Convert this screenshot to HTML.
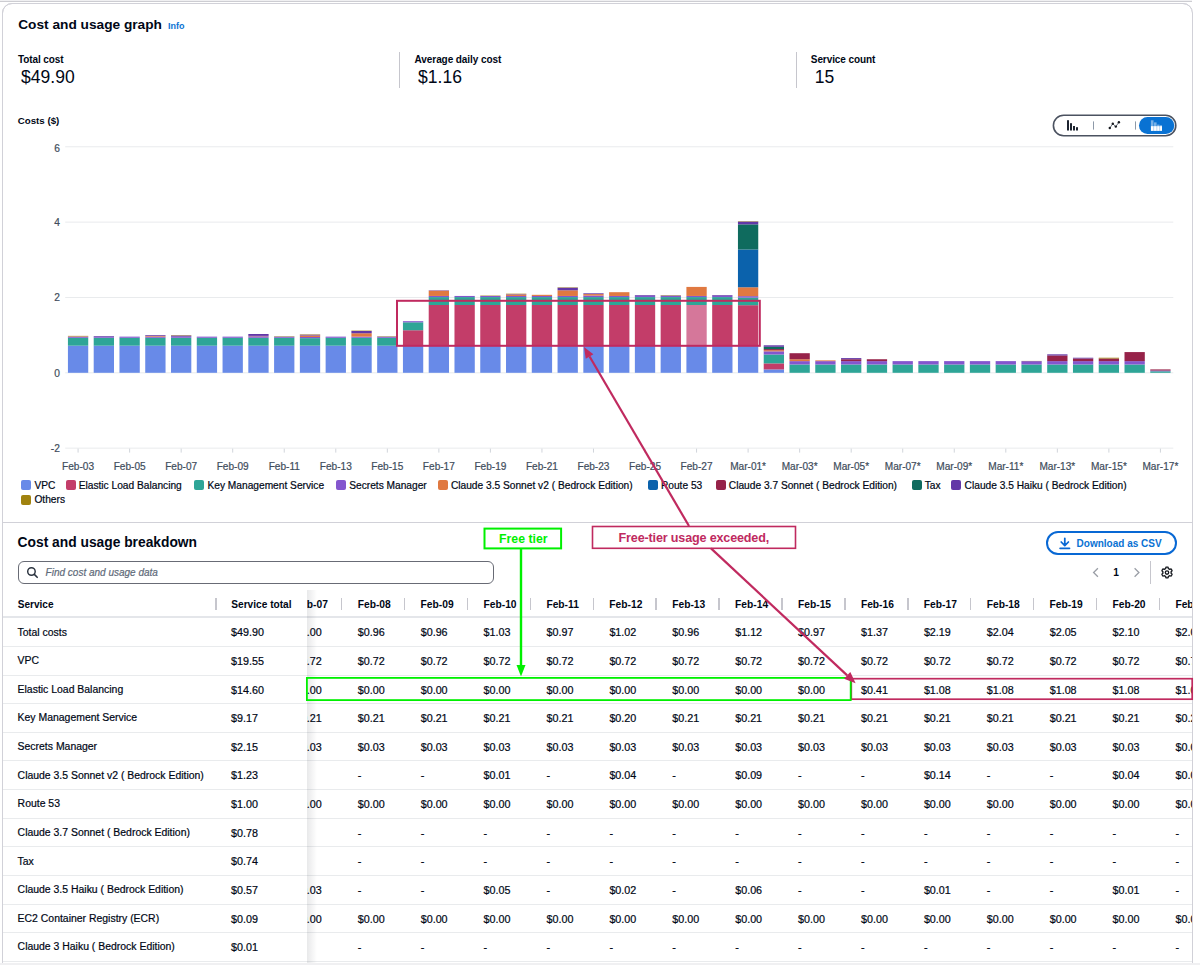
<!DOCTYPE html>
<html><head><meta charset="utf-8"><style>
html,body{margin:0;padding:0;}
body{width:1200px;height:965px;overflow:hidden;position:relative;background:#fff;font-family:"Liberation Sans", sans-serif;}
.t{position:absolute;white-space:nowrap;line-height:1;}
svg{position:absolute;left:0;top:0;}
</style></head><body>
<div style="position:absolute;left:0.00px;top:0.00px;width:1200.00px;height:1.00px;background:#f0f0f2;"></div>
<div style="position:absolute;left:0.00px;top:1.00px;width:1200.00px;height:1.00px;background:#cdcdd2;"></div>
<div style="position:absolute;left:2px;top:3px;width:1189px;height:1100px;border:1px solid #d1d1d8;border-radius:10px;background:#fff"></div>
<div class="t" style="left:18.20px;top:17.70px;font-size:13.7px;font-weight:bold;font-style:normal;color:#000716;">Cost and usage graph</div>
<div class="t" style="left:168.00px;top:21.68px;font-size:9.0px;font-weight:bold;font-style:normal;color:#0972d3;">Info</div>
<div class="t" style="left:17.90px;top:54.73px;font-size:10.0px;font-weight:bold;font-style:normal;color:#000716;letter-spacing:-0.08px;">Total cost</div>
<div class="t" style="left:21.00px;top:69.29px;font-size:17.5px;font-weight:normal;font-style:normal;color:#000716;letter-spacing:0.05px;">$49.90</div>
<div style="position:absolute;left:399.00px;top:51.50px;width:1.00px;height:36.50px;background:#c6c6cd;"></div>
<div class="t" style="left:414.60px;top:54.73px;font-size:10.0px;font-weight:bold;font-style:normal;color:#000716;letter-spacing:-0.08px;">Average daily cost</div>
<div class="t" style="left:418.00px;top:69.19px;font-size:17.5px;font-weight:normal;font-style:normal;color:#000716;letter-spacing:0.05px;">$1.16</div>
<div style="position:absolute;left:796.00px;top:51.50px;width:1.00px;height:36.50px;background:#c6c6cd;"></div>
<div class="t" style="left:810.80px;top:54.73px;font-size:10.0px;font-weight:bold;font-style:normal;color:#000716;letter-spacing:-0.08px;">Service count</div>
<div class="t" style="left:814.80px;top:69.19px;font-size:17.5px;font-weight:normal;font-style:normal;color:#000716;letter-spacing:0.05px;">15</div>
<div class="t" style="left:17.80px;top:116.39px;font-size:9.7px;font-weight:bold;font-style:normal;color:#000716;">Costs ($)</div>
<div class="t" style="left:-540.20px;width:600px;text-align:right;top:144.15px;font-size:10.2px;font-weight:normal;font-style:normal;color:#414d5c;-webkit-text-stroke:0.2px currentColor;">6</div>
<div class="t" style="left:-540.20px;width:600px;text-align:right;top:217.89px;font-size:10.2px;font-weight:normal;font-style:normal;color:#414d5c;-webkit-text-stroke:0.2px currentColor;">4</div>
<div class="t" style="left:-540.20px;width:600px;text-align:right;top:293.23px;font-size:10.2px;font-weight:normal;font-style:normal;color:#414d5c;-webkit-text-stroke:0.2px currentColor;">2</div>
<div class="t" style="left:-540.20px;width:600px;text-align:right;top:368.57px;font-size:10.2px;font-weight:normal;font-style:normal;color:#414d5c;-webkit-text-stroke:0.2px currentColor;">0</div>
<div class="t" style="left:-540.20px;width:600px;text-align:right;top:443.91px;font-size:10.2px;font-weight:normal;font-style:normal;color:#414d5c;-webkit-text-stroke:0.2px currentColor;">-2</div>
<div class="t" style="left:-221.92px;width:600px;text-align:center;top:461.55px;font-size:10.1px;font-weight:normal;font-style:normal;color:#414d5c;-webkit-text-stroke:0.2px currentColor;">Feb-03</div>
<div class="t" style="left:-170.38px;width:600px;text-align:center;top:461.55px;font-size:10.1px;font-weight:normal;font-style:normal;color:#414d5c;-webkit-text-stroke:0.2px currentColor;">Feb-05</div>
<div class="t" style="left:-118.84px;width:600px;text-align:center;top:461.55px;font-size:10.1px;font-weight:normal;font-style:normal;color:#414d5c;-webkit-text-stroke:0.2px currentColor;">Feb-07</div>
<div class="t" style="left:-67.30px;width:600px;text-align:center;top:461.55px;font-size:10.1px;font-weight:normal;font-style:normal;color:#414d5c;-webkit-text-stroke:0.2px currentColor;">Feb-09</div>
<div class="t" style="left:-15.76px;width:600px;text-align:center;top:461.55px;font-size:10.1px;font-weight:normal;font-style:normal;color:#414d5c;-webkit-text-stroke:0.2px currentColor;">Feb-11</div>
<div class="t" style="left:35.78px;width:600px;text-align:center;top:461.55px;font-size:10.1px;font-weight:normal;font-style:normal;color:#414d5c;-webkit-text-stroke:0.2px currentColor;">Feb-13</div>
<div class="t" style="left:87.32px;width:600px;text-align:center;top:461.55px;font-size:10.1px;font-weight:normal;font-style:normal;color:#414d5c;-webkit-text-stroke:0.2px currentColor;">Feb-15</div>
<div class="t" style="left:138.86px;width:600px;text-align:center;top:461.55px;font-size:10.1px;font-weight:normal;font-style:normal;color:#414d5c;-webkit-text-stroke:0.2px currentColor;">Feb-17</div>
<div class="t" style="left:190.40px;width:600px;text-align:center;top:461.55px;font-size:10.1px;font-weight:normal;font-style:normal;color:#414d5c;-webkit-text-stroke:0.2px currentColor;">Feb-19</div>
<div class="t" style="left:241.94px;width:600px;text-align:center;top:461.55px;font-size:10.1px;font-weight:normal;font-style:normal;color:#414d5c;-webkit-text-stroke:0.2px currentColor;">Feb-21</div>
<div class="t" style="left:293.48px;width:600px;text-align:center;top:461.55px;font-size:10.1px;font-weight:normal;font-style:normal;color:#414d5c;-webkit-text-stroke:0.2px currentColor;">Feb-23</div>
<div class="t" style="left:345.02px;width:600px;text-align:center;top:461.55px;font-size:10.1px;font-weight:normal;font-style:normal;color:#414d5c;-webkit-text-stroke:0.2px currentColor;">Feb-25</div>
<div class="t" style="left:396.56px;width:600px;text-align:center;top:461.55px;font-size:10.1px;font-weight:normal;font-style:normal;color:#414d5c;-webkit-text-stroke:0.2px currentColor;">Feb-27</div>
<div class="t" style="left:448.10px;width:600px;text-align:center;top:461.55px;font-size:10.1px;font-weight:normal;font-style:normal;color:#414d5c;-webkit-text-stroke:0.2px currentColor;">Mar-01*</div>
<div class="t" style="left:499.64px;width:600px;text-align:center;top:461.55px;font-size:10.1px;font-weight:normal;font-style:normal;color:#414d5c;-webkit-text-stroke:0.2px currentColor;">Mar-03*</div>
<div class="t" style="left:551.18px;width:600px;text-align:center;top:461.55px;font-size:10.1px;font-weight:normal;font-style:normal;color:#414d5c;-webkit-text-stroke:0.2px currentColor;">Mar-05*</div>
<div class="t" style="left:602.72px;width:600px;text-align:center;top:461.55px;font-size:10.1px;font-weight:normal;font-style:normal;color:#414d5c;-webkit-text-stroke:0.2px currentColor;">Mar-07*</div>
<div class="t" style="left:654.26px;width:600px;text-align:center;top:461.55px;font-size:10.1px;font-weight:normal;font-style:normal;color:#414d5c;-webkit-text-stroke:0.2px currentColor;">Mar-09*</div>
<div class="t" style="left:705.80px;width:600px;text-align:center;top:461.55px;font-size:10.1px;font-weight:normal;font-style:normal;color:#414d5c;-webkit-text-stroke:0.2px currentColor;">Mar-11*</div>
<div class="t" style="left:757.34px;width:600px;text-align:center;top:461.55px;font-size:10.1px;font-weight:normal;font-style:normal;color:#414d5c;-webkit-text-stroke:0.2px currentColor;">Mar-13*</div>
<div class="t" style="left:808.88px;width:600px;text-align:center;top:461.55px;font-size:10.1px;font-weight:normal;font-style:normal;color:#414d5c;-webkit-text-stroke:0.2px currentColor;">Mar-15*</div>
<div class="t" style="left:860.42px;width:600px;text-align:center;top:461.55px;font-size:10.1px;font-weight:normal;font-style:normal;color:#414d5c;-webkit-text-stroke:0.2px currentColor;">Mar-17*</div>
<div style="position:absolute;left:21.25px;top:480.00px;width:10.00px;height:10.00px;background:#688ae8;border-radius:2px;"></div>
<div class="t" style="left:34.45px;top:480.67px;font-size:10.2px;font-weight:normal;font-style:normal;color:#000716;-webkit-text-stroke:0.2px currentColor;">VPC</div>
<div style="position:absolute;left:65.50px;top:480.00px;width:10.00px;height:10.00px;background:#c33d69;border-radius:2px;"></div>
<div class="t" style="left:78.70px;top:480.67px;font-size:10.2px;font-weight:normal;font-style:normal;color:#000716;-webkit-text-stroke:0.2px currentColor;">Elastic Load Balancing</div>
<div style="position:absolute;left:194.25px;top:480.00px;width:10.00px;height:10.00px;background:#2ea597;border-radius:2px;"></div>
<div class="t" style="left:207.45px;top:480.67px;font-size:10.2px;font-weight:normal;font-style:normal;color:#000716;-webkit-text-stroke:0.2px currentColor;">Key Management Service</div>
<div style="position:absolute;left:336.00px;top:480.00px;width:10.00px;height:10.00px;background:#8456ce;border-radius:2px;"></div>
<div class="t" style="left:349.20px;top:480.67px;font-size:10.2px;font-weight:normal;font-style:normal;color:#000716;-webkit-text-stroke:0.2px currentColor;">Secrets Manager</div>
<div style="position:absolute;left:437.70px;top:480.00px;width:10.00px;height:10.00px;background:#e07941;border-radius:2px;"></div>
<div class="t" style="left:450.90px;top:480.67px;font-size:10.2px;font-weight:normal;font-style:normal;color:#000716;-webkit-text-stroke:0.2px currentColor;">Claude 3.5 Sonnet v2 ( Bedrock Edition)</div>
<div style="position:absolute;left:647.70px;top:480.00px;width:10.00px;height:10.00px;background:#0b62ac;border-radius:2px;"></div>
<div class="t" style="left:660.90px;top:480.67px;font-size:10.2px;font-weight:normal;font-style:normal;color:#000716;-webkit-text-stroke:0.2px currentColor;">Route 53</div>
<div style="position:absolute;left:715.60px;top:480.00px;width:10.00px;height:10.00px;background:#962249;border-radius:2px;"></div>
<div class="t" style="left:728.80px;top:480.67px;font-size:10.2px;font-weight:normal;font-style:normal;color:#000716;-webkit-text-stroke:0.2px currentColor;">Claude 3.7 Sonnet ( Bedrock Edition)</div>
<div style="position:absolute;left:911.50px;top:480.00px;width:10.00px;height:10.00px;background:#0f6b5e;border-radius:2px;"></div>
<div class="t" style="left:924.70px;top:480.67px;font-size:10.2px;font-weight:normal;font-style:normal;color:#000716;-webkit-text-stroke:0.2px currentColor;">Tax</div>
<div style="position:absolute;left:951.40px;top:480.00px;width:10.00px;height:10.00px;background:#6237a7;border-radius:2px;"></div>
<div class="t" style="left:964.60px;top:480.67px;font-size:10.2px;font-weight:normal;font-style:normal;color:#000716;-webkit-text-stroke:0.2px currentColor;">Claude 3.5 Haiku ( Bedrock Edition)</div>
<div style="position:absolute;left:21.25px;top:495.00px;width:10.00px;height:10.00px;background:#a0820f;border-radius:2px;"></div>
<div class="t" style="left:34.45px;top:495.17px;font-size:10.2px;font-weight:normal;font-style:normal;color:#000716;-webkit-text-stroke:0.2px currentColor;">Others</div>
<div style="position:absolute;left:3.00px;top:522.00px;width:1189.00px;height:1.00px;background:#d1d1d8;"></div>
<div class="t" style="left:17.60px;top:535.82px;font-size:13.8px;font-weight:bold;font-style:normal;color:#000716;">Cost and usage breakdown</div>
<div style="position:absolute;left:1045.8px;top:531.0px;width:127.2px;height:19.8px;border:2px solid #0868d4;border-radius:12px;"></div>
<div class="t" style="left:1076.60px;top:538.93px;font-size:10.0px;font-weight:bold;font-style:normal;color:#0972d3;">Download as CSV</div>
<div class="t" style="left:816.20px;width:600px;text-align:center;top:567.67px;font-size:10.2px;font-weight:bold;font-style:normal;color:#000716;">1</div>
<div style="position:absolute;left:1150.00px;top:560.80px;width:1.00px;height:23.00px;background:#c6c6cd;"></div>
<div style="position:absolute;left:18.3px;top:561px;width:473.4px;height:20.7px;border:1px solid #686b75;border-radius:6px;"></div>
<div class="t" style="left:45.60px;top:567.53px;font-size:10.0px;font-weight:normal;font-style:italic;color:#5f6b7a;-webkit-text-stroke:0.2px currentColor;">Find cost and usage data</div>
<div style="position:absolute;left:3.00px;top:616.00px;width:1189.00px;height:2.00px;background:#e4e6ea;"></div>
<div style="position:absolute;left:3.00px;top:646.00px;width:1189.00px;height:1.00px;background:#e9ebed;"></div>
<div style="position:absolute;left:3.00px;top:675.00px;width:1189.00px;height:1.00px;background:#e9ebed;"></div>
<div style="position:absolute;left:3.00px;top:703.00px;width:1189.00px;height:1.00px;background:#e9ebed;"></div>
<div style="position:absolute;left:3.00px;top:732.00px;width:1189.00px;height:1.00px;background:#e9ebed;"></div>
<div style="position:absolute;left:3.00px;top:760.00px;width:1189.00px;height:1.00px;background:#e9ebed;"></div>
<div style="position:absolute;left:3.00px;top:789.00px;width:1189.00px;height:1.00px;background:#e9ebed;"></div>
<div style="position:absolute;left:3.00px;top:818.00px;width:1189.00px;height:1.00px;background:#e9ebed;"></div>
<div style="position:absolute;left:3.00px;top:846.00px;width:1189.00px;height:1.00px;background:#e9ebed;"></div>
<div style="position:absolute;left:3.00px;top:875.00px;width:1189.00px;height:1.00px;background:#e9ebed;"></div>
<div style="position:absolute;left:3.00px;top:904.00px;width:1189.00px;height:1.00px;background:#e9ebed;"></div>
<div style="position:absolute;left:3.00px;top:932.00px;width:1189.00px;height:1.00px;background:#e9ebed;"></div>
<div style="position:absolute;left:3.00px;top:961.00px;width:1189.00px;height:1.00px;background:#e9ebed;"></div>
<div class="t" style="left:17.60px;top:627.66px;font-size:10.45px;font-weight:normal;font-style:normal;color:#000716;-webkit-text-stroke:0.2px currentColor;">Total costs</div>
<div class="t" style="left:231.00px;top:627.41px;font-size:10.75px;font-weight:normal;font-style:normal;color:#000716;-webkit-text-stroke:0.2px currentColor;">$49.90</div>
<div class="t" style="left:17.60px;top:656.27px;font-size:10.45px;font-weight:normal;font-style:normal;color:#000716;-webkit-text-stroke:0.2px currentColor;">VPC</div>
<div class="t" style="left:231.00px;top:656.02px;font-size:10.75px;font-weight:normal;font-style:normal;color:#000716;-webkit-text-stroke:0.2px currentColor;">$19.55</div>
<div class="t" style="left:17.60px;top:684.88px;font-size:10.45px;font-weight:normal;font-style:normal;color:#000716;-webkit-text-stroke:0.2px currentColor;">Elastic Load Balancing</div>
<div class="t" style="left:231.00px;top:684.63px;font-size:10.75px;font-weight:normal;font-style:normal;color:#000716;-webkit-text-stroke:0.2px currentColor;">$14.60</div>
<div class="t" style="left:17.60px;top:713.49px;font-size:10.45px;font-weight:normal;font-style:normal;color:#000716;-webkit-text-stroke:0.2px currentColor;">Key Management Service</div>
<div class="t" style="left:231.00px;top:713.24px;font-size:10.75px;font-weight:normal;font-style:normal;color:#000716;-webkit-text-stroke:0.2px currentColor;">$9.17</div>
<div class="t" style="left:17.60px;top:742.10px;font-size:10.45px;font-weight:normal;font-style:normal;color:#000716;-webkit-text-stroke:0.2px currentColor;">Secrets Manager</div>
<div class="t" style="left:231.00px;top:741.85px;font-size:10.75px;font-weight:normal;font-style:normal;color:#000716;-webkit-text-stroke:0.2px currentColor;">$2.15</div>
<div class="t" style="left:17.60px;top:770.71px;font-size:10.45px;font-weight:normal;font-style:normal;color:#000716;-webkit-text-stroke:0.2px currentColor;">Claude 3.5 Sonnet v2 ( Bedrock Edition)</div>
<div class="t" style="left:231.00px;top:770.46px;font-size:10.75px;font-weight:normal;font-style:normal;color:#000716;-webkit-text-stroke:0.2px currentColor;">$1.23</div>
<div class="t" style="left:17.60px;top:799.32px;font-size:10.45px;font-weight:normal;font-style:normal;color:#000716;-webkit-text-stroke:0.2px currentColor;">Route 53</div>
<div class="t" style="left:231.00px;top:799.07px;font-size:10.75px;font-weight:normal;font-style:normal;color:#000716;-webkit-text-stroke:0.2px currentColor;">$1.00</div>
<div class="t" style="left:17.60px;top:827.93px;font-size:10.45px;font-weight:normal;font-style:normal;color:#000716;-webkit-text-stroke:0.2px currentColor;">Claude 3.7 Sonnet ( Bedrock Edition)</div>
<div class="t" style="left:231.00px;top:827.68px;font-size:10.75px;font-weight:normal;font-style:normal;color:#000716;-webkit-text-stroke:0.2px currentColor;">$0.78</div>
<div class="t" style="left:17.60px;top:856.54px;font-size:10.45px;font-weight:normal;font-style:normal;color:#000716;-webkit-text-stroke:0.2px currentColor;">Tax</div>
<div class="t" style="left:231.00px;top:856.29px;font-size:10.75px;font-weight:normal;font-style:normal;color:#000716;-webkit-text-stroke:0.2px currentColor;">$0.74</div>
<div class="t" style="left:17.60px;top:885.15px;font-size:10.45px;font-weight:normal;font-style:normal;color:#000716;-webkit-text-stroke:0.2px currentColor;">Claude 3.5 Haiku ( Bedrock Edition)</div>
<div class="t" style="left:231.00px;top:884.90px;font-size:10.75px;font-weight:normal;font-style:normal;color:#000716;-webkit-text-stroke:0.2px currentColor;">$0.57</div>
<div class="t" style="left:17.60px;top:913.76px;font-size:10.45px;font-weight:normal;font-style:normal;color:#000716;-webkit-text-stroke:0.2px currentColor;">EC2 Container Registry (ECR)</div>
<div class="t" style="left:231.00px;top:913.51px;font-size:10.75px;font-weight:normal;font-style:normal;color:#000716;-webkit-text-stroke:0.2px currentColor;">$0.09</div>
<div class="t" style="left:17.60px;top:942.37px;font-size:10.45px;font-weight:normal;font-style:normal;color:#000716;-webkit-text-stroke:0.2px currentColor;">Claude 3 Haiku ( Bedrock Edition)</div>
<div class="t" style="left:231.00px;top:942.12px;font-size:10.75px;font-weight:normal;font-style:normal;color:#000716;-webkit-text-stroke:0.2px currentColor;">$0.01</div>
<div style="position:absolute;left:307px;top:585px;width:885px;height:380px;overflow:hidden"><div class="t" style="left:-12.20px;top:14.82px;font-size:10.25px;font-weight:bold;font-style:normal;color:#000716;">Feb-07</div>
<div style="position:absolute;left:33.95px;top:12.50px;width:1.50px;height:12.20px;background:#c6c6cd;"></div>
<div class="t" style="left:50.70px;top:14.82px;font-size:10.25px;font-weight:bold;font-style:normal;color:#000716;">Feb-08</div>
<div style="position:absolute;left:96.85px;top:12.50px;width:1.50px;height:12.20px;background:#c6c6cd;"></div>
<div class="t" style="left:113.60px;top:14.82px;font-size:10.25px;font-weight:bold;font-style:normal;color:#000716;">Feb-09</div>
<div style="position:absolute;left:159.75px;top:12.50px;width:1.50px;height:12.20px;background:#c6c6cd;"></div>
<div class="t" style="left:176.50px;top:14.82px;font-size:10.25px;font-weight:bold;font-style:normal;color:#000716;">Feb-10</div>
<div style="position:absolute;left:222.65px;top:12.50px;width:1.50px;height:12.20px;background:#c6c6cd;"></div>
<div class="t" style="left:239.40px;top:14.82px;font-size:10.25px;font-weight:bold;font-style:normal;color:#000716;">Feb-11</div>
<div style="position:absolute;left:285.55px;top:12.50px;width:1.50px;height:12.20px;background:#c6c6cd;"></div>
<div class="t" style="left:302.30px;top:14.82px;font-size:10.25px;font-weight:bold;font-style:normal;color:#000716;">Feb-12</div>
<div style="position:absolute;left:348.45px;top:12.50px;width:1.50px;height:12.20px;background:#c6c6cd;"></div>
<div class="t" style="left:365.20px;top:14.82px;font-size:10.25px;font-weight:bold;font-style:normal;color:#000716;">Feb-13</div>
<div style="position:absolute;left:411.35px;top:12.50px;width:1.50px;height:12.20px;background:#c6c6cd;"></div>
<div class="t" style="left:428.10px;top:14.82px;font-size:10.25px;font-weight:bold;font-style:normal;color:#000716;">Feb-14</div>
<div style="position:absolute;left:474.25px;top:12.50px;width:1.50px;height:12.20px;background:#c6c6cd;"></div>
<div class="t" style="left:491.00px;top:14.82px;font-size:10.25px;font-weight:bold;font-style:normal;color:#000716;">Feb-15</div>
<div style="position:absolute;left:537.15px;top:12.50px;width:1.50px;height:12.20px;background:#c6c6cd;"></div>
<div class="t" style="left:553.90px;top:14.82px;font-size:10.25px;font-weight:bold;font-style:normal;color:#000716;">Feb-16</div>
<div style="position:absolute;left:600.05px;top:12.50px;width:1.50px;height:12.20px;background:#c6c6cd;"></div>
<div class="t" style="left:616.80px;top:14.82px;font-size:10.25px;font-weight:bold;font-style:normal;color:#000716;">Feb-17</div>
<div style="position:absolute;left:662.95px;top:12.50px;width:1.50px;height:12.20px;background:#c6c6cd;"></div>
<div class="t" style="left:679.70px;top:14.82px;font-size:10.25px;font-weight:bold;font-style:normal;color:#000716;">Feb-18</div>
<div style="position:absolute;left:725.85px;top:12.50px;width:1.50px;height:12.20px;background:#c6c6cd;"></div>
<div class="t" style="left:742.60px;top:14.82px;font-size:10.25px;font-weight:bold;font-style:normal;color:#000716;">Feb-19</div>
<div style="position:absolute;left:788.75px;top:12.50px;width:1.50px;height:12.20px;background:#c6c6cd;"></div>
<div class="t" style="left:805.50px;top:14.82px;font-size:10.25px;font-weight:bold;font-style:normal;color:#000716;">Feb-20</div>
<div style="position:absolute;left:851.65px;top:12.50px;width:1.50px;height:12.20px;background:#c6c6cd;"></div>
<div class="t" style="left:868.40px;top:14.82px;font-size:10.25px;font-weight:bold;font-style:normal;color:#000716;">Feb-21</div>
<div style="position:absolute;left:914.55px;top:12.50px;width:1.50px;height:12.20px;background:#c6c6cd;"></div>
<div class="t" style="left:-12.10px;top:42.41px;font-size:10.75px;font-weight:normal;font-style:normal;color:#000716;-webkit-text-stroke:0.2px currentColor;">$1.00</div>
<div class="t" style="left:50.80px;top:42.41px;font-size:10.75px;font-weight:normal;font-style:normal;color:#000716;-webkit-text-stroke:0.2px currentColor;">$0.96</div>
<div class="t" style="left:113.70px;top:42.41px;font-size:10.75px;font-weight:normal;font-style:normal;color:#000716;-webkit-text-stroke:0.2px currentColor;">$0.96</div>
<div class="t" style="left:176.60px;top:42.41px;font-size:10.75px;font-weight:normal;font-style:normal;color:#000716;-webkit-text-stroke:0.2px currentColor;">$1.03</div>
<div class="t" style="left:239.50px;top:42.41px;font-size:10.75px;font-weight:normal;font-style:normal;color:#000716;-webkit-text-stroke:0.2px currentColor;">$0.97</div>
<div class="t" style="left:302.40px;top:42.41px;font-size:10.75px;font-weight:normal;font-style:normal;color:#000716;-webkit-text-stroke:0.2px currentColor;">$1.02</div>
<div class="t" style="left:365.30px;top:42.41px;font-size:10.75px;font-weight:normal;font-style:normal;color:#000716;-webkit-text-stroke:0.2px currentColor;">$0.96</div>
<div class="t" style="left:428.20px;top:42.41px;font-size:10.75px;font-weight:normal;font-style:normal;color:#000716;-webkit-text-stroke:0.2px currentColor;">$1.12</div>
<div class="t" style="left:491.10px;top:42.41px;font-size:10.75px;font-weight:normal;font-style:normal;color:#000716;-webkit-text-stroke:0.2px currentColor;">$0.97</div>
<div class="t" style="left:554.00px;top:42.41px;font-size:10.75px;font-weight:normal;font-style:normal;color:#000716;-webkit-text-stroke:0.2px currentColor;">$1.37</div>
<div class="t" style="left:616.90px;top:42.41px;font-size:10.75px;font-weight:normal;font-style:normal;color:#000716;-webkit-text-stroke:0.2px currentColor;">$2.19</div>
<div class="t" style="left:679.80px;top:42.41px;font-size:10.75px;font-weight:normal;font-style:normal;color:#000716;-webkit-text-stroke:0.2px currentColor;">$2.04</div>
<div class="t" style="left:742.70px;top:42.41px;font-size:10.75px;font-weight:normal;font-style:normal;color:#000716;-webkit-text-stroke:0.2px currentColor;">$2.05</div>
<div class="t" style="left:805.60px;top:42.41px;font-size:10.75px;font-weight:normal;font-style:normal;color:#000716;-webkit-text-stroke:0.2px currentColor;">$2.10</div>
<div class="t" style="left:868.50px;top:42.41px;font-size:10.75px;font-weight:normal;font-style:normal;color:#000716;-webkit-text-stroke:0.2px currentColor;">$2.07</div>
<div class="t" style="left:-12.10px;top:71.02px;font-size:10.75px;font-weight:normal;font-style:normal;color:#000716;-webkit-text-stroke:0.2px currentColor;">$0.72</div>
<div class="t" style="left:50.80px;top:71.02px;font-size:10.75px;font-weight:normal;font-style:normal;color:#000716;-webkit-text-stroke:0.2px currentColor;">$0.72</div>
<div class="t" style="left:113.70px;top:71.02px;font-size:10.75px;font-weight:normal;font-style:normal;color:#000716;-webkit-text-stroke:0.2px currentColor;">$0.72</div>
<div class="t" style="left:176.60px;top:71.02px;font-size:10.75px;font-weight:normal;font-style:normal;color:#000716;-webkit-text-stroke:0.2px currentColor;">$0.72</div>
<div class="t" style="left:239.50px;top:71.02px;font-size:10.75px;font-weight:normal;font-style:normal;color:#000716;-webkit-text-stroke:0.2px currentColor;">$0.72</div>
<div class="t" style="left:302.40px;top:71.02px;font-size:10.75px;font-weight:normal;font-style:normal;color:#000716;-webkit-text-stroke:0.2px currentColor;">$0.72</div>
<div class="t" style="left:365.30px;top:71.02px;font-size:10.75px;font-weight:normal;font-style:normal;color:#000716;-webkit-text-stroke:0.2px currentColor;">$0.72</div>
<div class="t" style="left:428.20px;top:71.02px;font-size:10.75px;font-weight:normal;font-style:normal;color:#000716;-webkit-text-stroke:0.2px currentColor;">$0.72</div>
<div class="t" style="left:491.10px;top:71.02px;font-size:10.75px;font-weight:normal;font-style:normal;color:#000716;-webkit-text-stroke:0.2px currentColor;">$0.72</div>
<div class="t" style="left:554.00px;top:71.02px;font-size:10.75px;font-weight:normal;font-style:normal;color:#000716;-webkit-text-stroke:0.2px currentColor;">$0.72</div>
<div class="t" style="left:616.90px;top:71.02px;font-size:10.75px;font-weight:normal;font-style:normal;color:#000716;-webkit-text-stroke:0.2px currentColor;">$0.72</div>
<div class="t" style="left:679.80px;top:71.02px;font-size:10.75px;font-weight:normal;font-style:normal;color:#000716;-webkit-text-stroke:0.2px currentColor;">$0.72</div>
<div class="t" style="left:742.70px;top:71.02px;font-size:10.75px;font-weight:normal;font-style:normal;color:#000716;-webkit-text-stroke:0.2px currentColor;">$0.72</div>
<div class="t" style="left:805.60px;top:71.02px;font-size:10.75px;font-weight:normal;font-style:normal;color:#000716;-webkit-text-stroke:0.2px currentColor;">$0.72</div>
<div class="t" style="left:868.50px;top:71.02px;font-size:10.75px;font-weight:normal;font-style:normal;color:#000716;-webkit-text-stroke:0.2px currentColor;">$0.72</div>
<div class="t" style="left:-12.10px;top:99.63px;font-size:10.75px;font-weight:normal;font-style:normal;color:#000716;-webkit-text-stroke:0.2px currentColor;">$0.00</div>
<div class="t" style="left:50.80px;top:99.63px;font-size:10.75px;font-weight:normal;font-style:normal;color:#000716;-webkit-text-stroke:0.2px currentColor;">$0.00</div>
<div class="t" style="left:113.70px;top:99.63px;font-size:10.75px;font-weight:normal;font-style:normal;color:#000716;-webkit-text-stroke:0.2px currentColor;">$0.00</div>
<div class="t" style="left:176.60px;top:99.63px;font-size:10.75px;font-weight:normal;font-style:normal;color:#000716;-webkit-text-stroke:0.2px currentColor;">$0.00</div>
<div class="t" style="left:239.50px;top:99.63px;font-size:10.75px;font-weight:normal;font-style:normal;color:#000716;-webkit-text-stroke:0.2px currentColor;">$0.00</div>
<div class="t" style="left:302.40px;top:99.63px;font-size:10.75px;font-weight:normal;font-style:normal;color:#000716;-webkit-text-stroke:0.2px currentColor;">$0.00</div>
<div class="t" style="left:365.30px;top:99.63px;font-size:10.75px;font-weight:normal;font-style:normal;color:#000716;-webkit-text-stroke:0.2px currentColor;">$0.00</div>
<div class="t" style="left:428.20px;top:99.63px;font-size:10.75px;font-weight:normal;font-style:normal;color:#000716;-webkit-text-stroke:0.2px currentColor;">$0.00</div>
<div class="t" style="left:491.10px;top:99.63px;font-size:10.75px;font-weight:normal;font-style:normal;color:#000716;-webkit-text-stroke:0.2px currentColor;">$0.00</div>
<div class="t" style="left:554.00px;top:99.63px;font-size:10.75px;font-weight:normal;font-style:normal;color:#000716;-webkit-text-stroke:0.2px currentColor;">$0.41</div>
<div class="t" style="left:616.90px;top:99.63px;font-size:10.75px;font-weight:normal;font-style:normal;color:#000716;-webkit-text-stroke:0.2px currentColor;">$1.08</div>
<div class="t" style="left:679.80px;top:99.63px;font-size:10.75px;font-weight:normal;font-style:normal;color:#000716;-webkit-text-stroke:0.2px currentColor;">$1.08</div>
<div class="t" style="left:742.70px;top:99.63px;font-size:10.75px;font-weight:normal;font-style:normal;color:#000716;-webkit-text-stroke:0.2px currentColor;">$1.08</div>
<div class="t" style="left:805.60px;top:99.63px;font-size:10.75px;font-weight:normal;font-style:normal;color:#000716;-webkit-text-stroke:0.2px currentColor;">$1.08</div>
<div class="t" style="left:868.50px;top:99.63px;font-size:10.75px;font-weight:normal;font-style:normal;color:#000716;-webkit-text-stroke:0.2px currentColor;">$1.08</div>
<div class="t" style="left:-12.10px;top:128.24px;font-size:10.75px;font-weight:normal;font-style:normal;color:#000716;-webkit-text-stroke:0.2px currentColor;">$0.21</div>
<div class="t" style="left:50.80px;top:128.24px;font-size:10.75px;font-weight:normal;font-style:normal;color:#000716;-webkit-text-stroke:0.2px currentColor;">$0.21</div>
<div class="t" style="left:113.70px;top:128.24px;font-size:10.75px;font-weight:normal;font-style:normal;color:#000716;-webkit-text-stroke:0.2px currentColor;">$0.21</div>
<div class="t" style="left:176.60px;top:128.24px;font-size:10.75px;font-weight:normal;font-style:normal;color:#000716;-webkit-text-stroke:0.2px currentColor;">$0.21</div>
<div class="t" style="left:239.50px;top:128.24px;font-size:10.75px;font-weight:normal;font-style:normal;color:#000716;-webkit-text-stroke:0.2px currentColor;">$0.21</div>
<div class="t" style="left:302.40px;top:128.24px;font-size:10.75px;font-weight:normal;font-style:normal;color:#000716;-webkit-text-stroke:0.2px currentColor;">$0.20</div>
<div class="t" style="left:365.30px;top:128.24px;font-size:10.75px;font-weight:normal;font-style:normal;color:#000716;-webkit-text-stroke:0.2px currentColor;">$0.21</div>
<div class="t" style="left:428.20px;top:128.24px;font-size:10.75px;font-weight:normal;font-style:normal;color:#000716;-webkit-text-stroke:0.2px currentColor;">$0.21</div>
<div class="t" style="left:491.10px;top:128.24px;font-size:10.75px;font-weight:normal;font-style:normal;color:#000716;-webkit-text-stroke:0.2px currentColor;">$0.21</div>
<div class="t" style="left:554.00px;top:128.24px;font-size:10.75px;font-weight:normal;font-style:normal;color:#000716;-webkit-text-stroke:0.2px currentColor;">$0.21</div>
<div class="t" style="left:616.90px;top:128.24px;font-size:10.75px;font-weight:normal;font-style:normal;color:#000716;-webkit-text-stroke:0.2px currentColor;">$0.21</div>
<div class="t" style="left:679.80px;top:128.24px;font-size:10.75px;font-weight:normal;font-style:normal;color:#000716;-webkit-text-stroke:0.2px currentColor;">$0.21</div>
<div class="t" style="left:742.70px;top:128.24px;font-size:10.75px;font-weight:normal;font-style:normal;color:#000716;-webkit-text-stroke:0.2px currentColor;">$0.21</div>
<div class="t" style="left:805.60px;top:128.24px;font-size:10.75px;font-weight:normal;font-style:normal;color:#000716;-webkit-text-stroke:0.2px currentColor;">$0.21</div>
<div class="t" style="left:868.50px;top:128.24px;font-size:10.75px;font-weight:normal;font-style:normal;color:#000716;-webkit-text-stroke:0.2px currentColor;">$0.21</div>
<div class="t" style="left:-12.10px;top:156.85px;font-size:10.75px;font-weight:normal;font-style:normal;color:#000716;-webkit-text-stroke:0.2px currentColor;">$0.03</div>
<div class="t" style="left:50.80px;top:156.85px;font-size:10.75px;font-weight:normal;font-style:normal;color:#000716;-webkit-text-stroke:0.2px currentColor;">$0.03</div>
<div class="t" style="left:113.70px;top:156.85px;font-size:10.75px;font-weight:normal;font-style:normal;color:#000716;-webkit-text-stroke:0.2px currentColor;">$0.03</div>
<div class="t" style="left:176.60px;top:156.85px;font-size:10.75px;font-weight:normal;font-style:normal;color:#000716;-webkit-text-stroke:0.2px currentColor;">$0.03</div>
<div class="t" style="left:239.50px;top:156.85px;font-size:10.75px;font-weight:normal;font-style:normal;color:#000716;-webkit-text-stroke:0.2px currentColor;">$0.03</div>
<div class="t" style="left:302.40px;top:156.85px;font-size:10.75px;font-weight:normal;font-style:normal;color:#000716;-webkit-text-stroke:0.2px currentColor;">$0.03</div>
<div class="t" style="left:365.30px;top:156.85px;font-size:10.75px;font-weight:normal;font-style:normal;color:#000716;-webkit-text-stroke:0.2px currentColor;">$0.03</div>
<div class="t" style="left:428.20px;top:156.85px;font-size:10.75px;font-weight:normal;font-style:normal;color:#000716;-webkit-text-stroke:0.2px currentColor;">$0.03</div>
<div class="t" style="left:491.10px;top:156.85px;font-size:10.75px;font-weight:normal;font-style:normal;color:#000716;-webkit-text-stroke:0.2px currentColor;">$0.03</div>
<div class="t" style="left:554.00px;top:156.85px;font-size:10.75px;font-weight:normal;font-style:normal;color:#000716;-webkit-text-stroke:0.2px currentColor;">$0.03</div>
<div class="t" style="left:616.90px;top:156.85px;font-size:10.75px;font-weight:normal;font-style:normal;color:#000716;-webkit-text-stroke:0.2px currentColor;">$0.03</div>
<div class="t" style="left:679.80px;top:156.85px;font-size:10.75px;font-weight:normal;font-style:normal;color:#000716;-webkit-text-stroke:0.2px currentColor;">$0.03</div>
<div class="t" style="left:742.70px;top:156.85px;font-size:10.75px;font-weight:normal;font-style:normal;color:#000716;-webkit-text-stroke:0.2px currentColor;">$0.03</div>
<div class="t" style="left:805.60px;top:156.85px;font-size:10.75px;font-weight:normal;font-style:normal;color:#000716;-webkit-text-stroke:0.2px currentColor;">$0.03</div>
<div class="t" style="left:868.50px;top:156.85px;font-size:10.75px;font-weight:normal;font-style:normal;color:#000716;-webkit-text-stroke:0.2px currentColor;">$0.03</div>
<div class="t" style="left:-12.10px;top:185.46px;font-size:10.75px;font-weight:normal;font-style:normal;color:#000716;-webkit-text-stroke:0.2px currentColor;">-</div>
<div class="t" style="left:50.80px;top:185.46px;font-size:10.75px;font-weight:normal;font-style:normal;color:#000716;-webkit-text-stroke:0.2px currentColor;">-</div>
<div class="t" style="left:113.70px;top:185.46px;font-size:10.75px;font-weight:normal;font-style:normal;color:#000716;-webkit-text-stroke:0.2px currentColor;">-</div>
<div class="t" style="left:176.60px;top:185.46px;font-size:10.75px;font-weight:normal;font-style:normal;color:#000716;-webkit-text-stroke:0.2px currentColor;">$0.01</div>
<div class="t" style="left:239.50px;top:185.46px;font-size:10.75px;font-weight:normal;font-style:normal;color:#000716;-webkit-text-stroke:0.2px currentColor;">-</div>
<div class="t" style="left:302.40px;top:185.46px;font-size:10.75px;font-weight:normal;font-style:normal;color:#000716;-webkit-text-stroke:0.2px currentColor;">$0.04</div>
<div class="t" style="left:365.30px;top:185.46px;font-size:10.75px;font-weight:normal;font-style:normal;color:#000716;-webkit-text-stroke:0.2px currentColor;">-</div>
<div class="t" style="left:428.20px;top:185.46px;font-size:10.75px;font-weight:normal;font-style:normal;color:#000716;-webkit-text-stroke:0.2px currentColor;">$0.09</div>
<div class="t" style="left:491.10px;top:185.46px;font-size:10.75px;font-weight:normal;font-style:normal;color:#000716;-webkit-text-stroke:0.2px currentColor;">-</div>
<div class="t" style="left:554.00px;top:185.46px;font-size:10.75px;font-weight:normal;font-style:normal;color:#000716;-webkit-text-stroke:0.2px currentColor;">-</div>
<div class="t" style="left:616.90px;top:185.46px;font-size:10.75px;font-weight:normal;font-style:normal;color:#000716;-webkit-text-stroke:0.2px currentColor;">$0.14</div>
<div class="t" style="left:679.80px;top:185.46px;font-size:10.75px;font-weight:normal;font-style:normal;color:#000716;-webkit-text-stroke:0.2px currentColor;">-</div>
<div class="t" style="left:742.70px;top:185.46px;font-size:10.75px;font-weight:normal;font-style:normal;color:#000716;-webkit-text-stroke:0.2px currentColor;">-</div>
<div class="t" style="left:805.60px;top:185.46px;font-size:10.75px;font-weight:normal;font-style:normal;color:#000716;-webkit-text-stroke:0.2px currentColor;">$0.04</div>
<div class="t" style="left:868.50px;top:185.46px;font-size:10.75px;font-weight:normal;font-style:normal;color:#000716;-webkit-text-stroke:0.2px currentColor;">$0.03</div>
<div class="t" style="left:-12.10px;top:214.07px;font-size:10.75px;font-weight:normal;font-style:normal;color:#000716;-webkit-text-stroke:0.2px currentColor;">$0.00</div>
<div class="t" style="left:50.80px;top:214.07px;font-size:10.75px;font-weight:normal;font-style:normal;color:#000716;-webkit-text-stroke:0.2px currentColor;">$0.00</div>
<div class="t" style="left:113.70px;top:214.07px;font-size:10.75px;font-weight:normal;font-style:normal;color:#000716;-webkit-text-stroke:0.2px currentColor;">$0.00</div>
<div class="t" style="left:176.60px;top:214.07px;font-size:10.75px;font-weight:normal;font-style:normal;color:#000716;-webkit-text-stroke:0.2px currentColor;">$0.00</div>
<div class="t" style="left:239.50px;top:214.07px;font-size:10.75px;font-weight:normal;font-style:normal;color:#000716;-webkit-text-stroke:0.2px currentColor;">$0.00</div>
<div class="t" style="left:302.40px;top:214.07px;font-size:10.75px;font-weight:normal;font-style:normal;color:#000716;-webkit-text-stroke:0.2px currentColor;">$0.00</div>
<div class="t" style="left:365.30px;top:214.07px;font-size:10.75px;font-weight:normal;font-style:normal;color:#000716;-webkit-text-stroke:0.2px currentColor;">$0.00</div>
<div class="t" style="left:428.20px;top:214.07px;font-size:10.75px;font-weight:normal;font-style:normal;color:#000716;-webkit-text-stroke:0.2px currentColor;">$0.00</div>
<div class="t" style="left:491.10px;top:214.07px;font-size:10.75px;font-weight:normal;font-style:normal;color:#000716;-webkit-text-stroke:0.2px currentColor;">$0.00</div>
<div class="t" style="left:554.00px;top:214.07px;font-size:10.75px;font-weight:normal;font-style:normal;color:#000716;-webkit-text-stroke:0.2px currentColor;">$0.00</div>
<div class="t" style="left:616.90px;top:214.07px;font-size:10.75px;font-weight:normal;font-style:normal;color:#000716;-webkit-text-stroke:0.2px currentColor;">$0.00</div>
<div class="t" style="left:679.80px;top:214.07px;font-size:10.75px;font-weight:normal;font-style:normal;color:#000716;-webkit-text-stroke:0.2px currentColor;">$0.00</div>
<div class="t" style="left:742.70px;top:214.07px;font-size:10.75px;font-weight:normal;font-style:normal;color:#000716;-webkit-text-stroke:0.2px currentColor;">$0.00</div>
<div class="t" style="left:805.60px;top:214.07px;font-size:10.75px;font-weight:normal;font-style:normal;color:#000716;-webkit-text-stroke:0.2px currentColor;">$0.00</div>
<div class="t" style="left:868.50px;top:214.07px;font-size:10.75px;font-weight:normal;font-style:normal;color:#000716;-webkit-text-stroke:0.2px currentColor;">$0.00</div>
<div class="t" style="left:-12.10px;top:242.68px;font-size:10.75px;font-weight:normal;font-style:normal;color:#000716;-webkit-text-stroke:0.2px currentColor;">-</div>
<div class="t" style="left:50.80px;top:242.68px;font-size:10.75px;font-weight:normal;font-style:normal;color:#000716;-webkit-text-stroke:0.2px currentColor;">-</div>
<div class="t" style="left:113.70px;top:242.68px;font-size:10.75px;font-weight:normal;font-style:normal;color:#000716;-webkit-text-stroke:0.2px currentColor;">-</div>
<div class="t" style="left:176.60px;top:242.68px;font-size:10.75px;font-weight:normal;font-style:normal;color:#000716;-webkit-text-stroke:0.2px currentColor;">-</div>
<div class="t" style="left:239.50px;top:242.68px;font-size:10.75px;font-weight:normal;font-style:normal;color:#000716;-webkit-text-stroke:0.2px currentColor;">-</div>
<div class="t" style="left:302.40px;top:242.68px;font-size:10.75px;font-weight:normal;font-style:normal;color:#000716;-webkit-text-stroke:0.2px currentColor;">-</div>
<div class="t" style="left:365.30px;top:242.68px;font-size:10.75px;font-weight:normal;font-style:normal;color:#000716;-webkit-text-stroke:0.2px currentColor;">-</div>
<div class="t" style="left:428.20px;top:242.68px;font-size:10.75px;font-weight:normal;font-style:normal;color:#000716;-webkit-text-stroke:0.2px currentColor;">-</div>
<div class="t" style="left:491.10px;top:242.68px;font-size:10.75px;font-weight:normal;font-style:normal;color:#000716;-webkit-text-stroke:0.2px currentColor;">-</div>
<div class="t" style="left:554.00px;top:242.68px;font-size:10.75px;font-weight:normal;font-style:normal;color:#000716;-webkit-text-stroke:0.2px currentColor;">-</div>
<div class="t" style="left:616.90px;top:242.68px;font-size:10.75px;font-weight:normal;font-style:normal;color:#000716;-webkit-text-stroke:0.2px currentColor;">-</div>
<div class="t" style="left:679.80px;top:242.68px;font-size:10.75px;font-weight:normal;font-style:normal;color:#000716;-webkit-text-stroke:0.2px currentColor;">-</div>
<div class="t" style="left:742.70px;top:242.68px;font-size:10.75px;font-weight:normal;font-style:normal;color:#000716;-webkit-text-stroke:0.2px currentColor;">-</div>
<div class="t" style="left:805.60px;top:242.68px;font-size:10.75px;font-weight:normal;font-style:normal;color:#000716;-webkit-text-stroke:0.2px currentColor;">-</div>
<div class="t" style="left:868.50px;top:242.68px;font-size:10.75px;font-weight:normal;font-style:normal;color:#000716;-webkit-text-stroke:0.2px currentColor;">-</div>
<div class="t" style="left:-12.10px;top:271.29px;font-size:10.75px;font-weight:normal;font-style:normal;color:#000716;-webkit-text-stroke:0.2px currentColor;">-</div>
<div class="t" style="left:50.80px;top:271.29px;font-size:10.75px;font-weight:normal;font-style:normal;color:#000716;-webkit-text-stroke:0.2px currentColor;">-</div>
<div class="t" style="left:113.70px;top:271.29px;font-size:10.75px;font-weight:normal;font-style:normal;color:#000716;-webkit-text-stroke:0.2px currentColor;">-</div>
<div class="t" style="left:176.60px;top:271.29px;font-size:10.75px;font-weight:normal;font-style:normal;color:#000716;-webkit-text-stroke:0.2px currentColor;">-</div>
<div class="t" style="left:239.50px;top:271.29px;font-size:10.75px;font-weight:normal;font-style:normal;color:#000716;-webkit-text-stroke:0.2px currentColor;">-</div>
<div class="t" style="left:302.40px;top:271.29px;font-size:10.75px;font-weight:normal;font-style:normal;color:#000716;-webkit-text-stroke:0.2px currentColor;">-</div>
<div class="t" style="left:365.30px;top:271.29px;font-size:10.75px;font-weight:normal;font-style:normal;color:#000716;-webkit-text-stroke:0.2px currentColor;">-</div>
<div class="t" style="left:428.20px;top:271.29px;font-size:10.75px;font-weight:normal;font-style:normal;color:#000716;-webkit-text-stroke:0.2px currentColor;">-</div>
<div class="t" style="left:491.10px;top:271.29px;font-size:10.75px;font-weight:normal;font-style:normal;color:#000716;-webkit-text-stroke:0.2px currentColor;">-</div>
<div class="t" style="left:554.00px;top:271.29px;font-size:10.75px;font-weight:normal;font-style:normal;color:#000716;-webkit-text-stroke:0.2px currentColor;">-</div>
<div class="t" style="left:616.90px;top:271.29px;font-size:10.75px;font-weight:normal;font-style:normal;color:#000716;-webkit-text-stroke:0.2px currentColor;">-</div>
<div class="t" style="left:679.80px;top:271.29px;font-size:10.75px;font-weight:normal;font-style:normal;color:#000716;-webkit-text-stroke:0.2px currentColor;">-</div>
<div class="t" style="left:742.70px;top:271.29px;font-size:10.75px;font-weight:normal;font-style:normal;color:#000716;-webkit-text-stroke:0.2px currentColor;">-</div>
<div class="t" style="left:805.60px;top:271.29px;font-size:10.75px;font-weight:normal;font-style:normal;color:#000716;-webkit-text-stroke:0.2px currentColor;">-</div>
<div class="t" style="left:868.50px;top:271.29px;font-size:10.75px;font-weight:normal;font-style:normal;color:#000716;-webkit-text-stroke:0.2px currentColor;">-</div>
<div class="t" style="left:-12.10px;top:299.90px;font-size:10.75px;font-weight:normal;font-style:normal;color:#000716;-webkit-text-stroke:0.2px currentColor;">$0.03</div>
<div class="t" style="left:50.80px;top:299.90px;font-size:10.75px;font-weight:normal;font-style:normal;color:#000716;-webkit-text-stroke:0.2px currentColor;">-</div>
<div class="t" style="left:113.70px;top:299.90px;font-size:10.75px;font-weight:normal;font-style:normal;color:#000716;-webkit-text-stroke:0.2px currentColor;">-</div>
<div class="t" style="left:176.60px;top:299.90px;font-size:10.75px;font-weight:normal;font-style:normal;color:#000716;-webkit-text-stroke:0.2px currentColor;">$0.05</div>
<div class="t" style="left:239.50px;top:299.90px;font-size:10.75px;font-weight:normal;font-style:normal;color:#000716;-webkit-text-stroke:0.2px currentColor;">-</div>
<div class="t" style="left:302.40px;top:299.90px;font-size:10.75px;font-weight:normal;font-style:normal;color:#000716;-webkit-text-stroke:0.2px currentColor;">$0.02</div>
<div class="t" style="left:365.30px;top:299.90px;font-size:10.75px;font-weight:normal;font-style:normal;color:#000716;-webkit-text-stroke:0.2px currentColor;">-</div>
<div class="t" style="left:428.20px;top:299.90px;font-size:10.75px;font-weight:normal;font-style:normal;color:#000716;-webkit-text-stroke:0.2px currentColor;">$0.06</div>
<div class="t" style="left:491.10px;top:299.90px;font-size:10.75px;font-weight:normal;font-style:normal;color:#000716;-webkit-text-stroke:0.2px currentColor;">-</div>
<div class="t" style="left:554.00px;top:299.90px;font-size:10.75px;font-weight:normal;font-style:normal;color:#000716;-webkit-text-stroke:0.2px currentColor;">-</div>
<div class="t" style="left:616.90px;top:299.90px;font-size:10.75px;font-weight:normal;font-style:normal;color:#000716;-webkit-text-stroke:0.2px currentColor;">$0.01</div>
<div class="t" style="left:679.80px;top:299.90px;font-size:10.75px;font-weight:normal;font-style:normal;color:#000716;-webkit-text-stroke:0.2px currentColor;">-</div>
<div class="t" style="left:742.70px;top:299.90px;font-size:10.75px;font-weight:normal;font-style:normal;color:#000716;-webkit-text-stroke:0.2px currentColor;">-</div>
<div class="t" style="left:805.60px;top:299.90px;font-size:10.75px;font-weight:normal;font-style:normal;color:#000716;-webkit-text-stroke:0.2px currentColor;">$0.01</div>
<div class="t" style="left:868.50px;top:299.90px;font-size:10.75px;font-weight:normal;font-style:normal;color:#000716;-webkit-text-stroke:0.2px currentColor;">-</div>
<div class="t" style="left:-12.10px;top:328.51px;font-size:10.75px;font-weight:normal;font-style:normal;color:#000716;-webkit-text-stroke:0.2px currentColor;">$0.00</div>
<div class="t" style="left:50.80px;top:328.51px;font-size:10.75px;font-weight:normal;font-style:normal;color:#000716;-webkit-text-stroke:0.2px currentColor;">$0.00</div>
<div class="t" style="left:113.70px;top:328.51px;font-size:10.75px;font-weight:normal;font-style:normal;color:#000716;-webkit-text-stroke:0.2px currentColor;">$0.00</div>
<div class="t" style="left:176.60px;top:328.51px;font-size:10.75px;font-weight:normal;font-style:normal;color:#000716;-webkit-text-stroke:0.2px currentColor;">$0.00</div>
<div class="t" style="left:239.50px;top:328.51px;font-size:10.75px;font-weight:normal;font-style:normal;color:#000716;-webkit-text-stroke:0.2px currentColor;">$0.00</div>
<div class="t" style="left:302.40px;top:328.51px;font-size:10.75px;font-weight:normal;font-style:normal;color:#000716;-webkit-text-stroke:0.2px currentColor;">$0.00</div>
<div class="t" style="left:365.30px;top:328.51px;font-size:10.75px;font-weight:normal;font-style:normal;color:#000716;-webkit-text-stroke:0.2px currentColor;">$0.00</div>
<div class="t" style="left:428.20px;top:328.51px;font-size:10.75px;font-weight:normal;font-style:normal;color:#000716;-webkit-text-stroke:0.2px currentColor;">$0.00</div>
<div class="t" style="left:491.10px;top:328.51px;font-size:10.75px;font-weight:normal;font-style:normal;color:#000716;-webkit-text-stroke:0.2px currentColor;">$0.00</div>
<div class="t" style="left:554.00px;top:328.51px;font-size:10.75px;font-weight:normal;font-style:normal;color:#000716;-webkit-text-stroke:0.2px currentColor;">$0.00</div>
<div class="t" style="left:616.90px;top:328.51px;font-size:10.75px;font-weight:normal;font-style:normal;color:#000716;-webkit-text-stroke:0.2px currentColor;">$0.00</div>
<div class="t" style="left:679.80px;top:328.51px;font-size:10.75px;font-weight:normal;font-style:normal;color:#000716;-webkit-text-stroke:0.2px currentColor;">$0.00</div>
<div class="t" style="left:742.70px;top:328.51px;font-size:10.75px;font-weight:normal;font-style:normal;color:#000716;-webkit-text-stroke:0.2px currentColor;">$0.00</div>
<div class="t" style="left:805.60px;top:328.51px;font-size:10.75px;font-weight:normal;font-style:normal;color:#000716;-webkit-text-stroke:0.2px currentColor;">$0.00</div>
<div class="t" style="left:868.50px;top:328.51px;font-size:10.75px;font-weight:normal;font-style:normal;color:#000716;-webkit-text-stroke:0.2px currentColor;">$0.00</div>
<div class="t" style="left:-12.10px;top:357.12px;font-size:10.75px;font-weight:normal;font-style:normal;color:#000716;-webkit-text-stroke:0.2px currentColor;">-</div>
<div class="t" style="left:50.80px;top:357.12px;font-size:10.75px;font-weight:normal;font-style:normal;color:#000716;-webkit-text-stroke:0.2px currentColor;">-</div>
<div class="t" style="left:113.70px;top:357.12px;font-size:10.75px;font-weight:normal;font-style:normal;color:#000716;-webkit-text-stroke:0.2px currentColor;">-</div>
<div class="t" style="left:176.60px;top:357.12px;font-size:10.75px;font-weight:normal;font-style:normal;color:#000716;-webkit-text-stroke:0.2px currentColor;">-</div>
<div class="t" style="left:239.50px;top:357.12px;font-size:10.75px;font-weight:normal;font-style:normal;color:#000716;-webkit-text-stroke:0.2px currentColor;">-</div>
<div class="t" style="left:302.40px;top:357.12px;font-size:10.75px;font-weight:normal;font-style:normal;color:#000716;-webkit-text-stroke:0.2px currentColor;">-</div>
<div class="t" style="left:365.30px;top:357.12px;font-size:10.75px;font-weight:normal;font-style:normal;color:#000716;-webkit-text-stroke:0.2px currentColor;">-</div>
<div class="t" style="left:428.20px;top:357.12px;font-size:10.75px;font-weight:normal;font-style:normal;color:#000716;-webkit-text-stroke:0.2px currentColor;">-</div>
<div class="t" style="left:491.10px;top:357.12px;font-size:10.75px;font-weight:normal;font-style:normal;color:#000716;-webkit-text-stroke:0.2px currentColor;">-</div>
<div class="t" style="left:554.00px;top:357.12px;font-size:10.75px;font-weight:normal;font-style:normal;color:#000716;-webkit-text-stroke:0.2px currentColor;">-</div>
<div class="t" style="left:616.90px;top:357.12px;font-size:10.75px;font-weight:normal;font-style:normal;color:#000716;-webkit-text-stroke:0.2px currentColor;">-</div>
<div class="t" style="left:679.80px;top:357.12px;font-size:10.75px;font-weight:normal;font-style:normal;color:#000716;-webkit-text-stroke:0.2px currentColor;">-</div>
<div class="t" style="left:742.70px;top:357.12px;font-size:10.75px;font-weight:normal;font-style:normal;color:#000716;-webkit-text-stroke:0.2px currentColor;">-</div>
<div class="t" style="left:805.60px;top:357.12px;font-size:10.75px;font-weight:normal;font-style:normal;color:#000716;-webkit-text-stroke:0.2px currentColor;">-</div>
<div class="t" style="left:868.50px;top:357.12px;font-size:10.75px;font-weight:normal;font-style:normal;color:#000716;-webkit-text-stroke:0.2px currentColor;">-</div></div>
<div class="t" style="left:17.80px;top:599.99px;font-size:10.05px;font-weight:bold;font-style:normal;color:#000716;">Service</div>
<div style="position:absolute;left:215.20px;top:597.50px;width:1.50px;height:12.20px;background:#c6c6cd;"></div>
<div class="t" style="left:231.30px;top:599.91px;font-size:10.15px;font-weight:bold;font-style:normal;color:#000716;">Service total</div>
<div style="position:absolute;left:307px;top:590px;width:10px;height:380px;background:linear-gradient(to right, rgba(0,7,22,0.09), rgba(0,7,22,0))"></div>
<svg width="1200" height="965" viewBox="0 0 1200 965"><rect x="1053.4" y="115.2" width="122.4" height="20.6" rx="10.3" fill="#fff" stroke="#4b5260" stroke-width="1.6"/><rect x="1139" y="117" width="35.3" height="17" rx="8.5" fill="#0972d3"/><rect x="1067" y="120.20" width="2.0" height="10.3" fill="#1d2430"/><rect x="1070" y="123.20" width="2.0" height="7.3" fill="#1d2430"/><rect x="1073" y="126.00" width="2.0" height="4.5" fill="#1d2430"/><rect x="1076" y="127.20" width="2.0" height="3.3" fill="#1d2430"/><rect x="1093" y="121.4" width="1" height="8.2" fill="#8d99a8"/><rect x="1135" y="121.4" width="1" height="8.2" fill="#8d99a8"/><polyline points="1109.8,128 1112.8,123.75 1115.8,126.6 1118.9,122.2" fill="none" stroke="#414d5c" stroke-width="0.8"/><circle cx="1109.8" cy="128" r="1.2" fill="#16191f"/><circle cx="1112.8" cy="123.75" r="1.2" fill="#16191f"/><circle cx="1115.8" cy="126.6" r="1.2" fill="#16191f"/><circle cx="1118.9" cy="122.2" r="1.2" fill="#16191f"/><rect x="1150.9" y="126.1" width="11.1" height="4.8" fill="#fff"/><rect x="1150.9" y="120.3" width="2.6" height="5.80" fill="#fff" opacity="0.45"/><rect x="1154.0" y="122.4" width="2.6" height="3.70" fill="#fff" opacity="0.45"/><rect x="1157.1" y="124.6" width="2.4" height="1.50" fill="#fff" opacity="0.45"/><rect x="1159.8" y="125.2" width="2.2" height="0.90" fill="#fff" opacity="0.45"/><rect x="1153.6" y="126.1" width="0.45" height="4.8" fill="#0972d3" opacity="0.6"/><rect x="1156.7" y="126.1" width="0.45" height="4.8" fill="#0972d3" opacity="0.6"/><rect x="1159.6" y="126.1" width="0.45" height="4.8" fill="#0972d3" opacity="0.6"/><rect x="65.2" y="146.28" width="1108.10" height="1" fill="#e9ebed"/><rect x="65.2" y="221.62" width="1108.10" height="1" fill="#e9ebed"/><rect x="65.2" y="296.96" width="1108.10" height="1" fill="#e9ebed"/><rect x="65.2" y="372.30" width="1108.10" height="1" fill="#e9ebed"/><rect x="65.2" y="447.64" width="1108.10" height="1" fill="#e9ebed"/><rect x="77.58" y="448.6" width="1" height="4" fill="#d1d5db"/><rect x="129.12" y="448.6" width="1" height="4" fill="#d1d5db"/><rect x="180.66" y="448.6" width="1" height="4" fill="#d1d5db"/><rect x="232.20" y="448.6" width="1" height="4" fill="#d1d5db"/><rect x="283.74" y="448.6" width="1" height="4" fill="#d1d5db"/><rect x="335.28" y="448.6" width="1" height="4" fill="#d1d5db"/><rect x="386.82" y="448.6" width="1" height="4" fill="#d1d5db"/><rect x="438.36" y="448.6" width="1" height="4" fill="#d1d5db"/><rect x="489.90" y="448.6" width="1" height="4" fill="#d1d5db"/><rect x="541.44" y="448.6" width="1" height="4" fill="#d1d5db"/><rect x="592.98" y="448.6" width="1" height="4" fill="#d1d5db"/><rect x="644.52" y="448.6" width="1" height="4" fill="#d1d5db"/><rect x="696.06" y="448.6" width="1" height="4" fill="#d1d5db"/><rect x="747.60" y="448.6" width="1" height="4" fill="#d1d5db"/><rect x="799.14" y="448.6" width="1" height="4" fill="#d1d5db"/><rect x="850.68" y="448.6" width="1" height="4" fill="#d1d5db"/><rect x="902.22" y="448.6" width="1" height="4" fill="#d1d5db"/><rect x="953.76" y="448.6" width="1" height="4" fill="#d1d5db"/><rect x="1005.30" y="448.6" width="1" height="4" fill="#d1d5db"/><rect x="1056.84" y="448.6" width="1" height="4" fill="#d1d5db"/><rect x="1108.38" y="448.6" width="1" height="4" fill="#d1d5db"/><rect x="1159.92" y="448.6" width="1" height="4" fill="#d1d5db"/><rect x="67.93" y="345.68" width="20.3" height="27.12" fill="#688ae8"/><rect x="67.93" y="337.77" width="20.3" height="7.91" fill="#2ea597"/><rect x="67.93" y="336.64" width="20.3" height="1.13" fill="#8456ce"/><rect x="67.93" y="336.26" width="20.3" height="0.38" fill="#e07941"/><rect x="67.93" y="335.88" width="20.3" height="0.38" fill="#a0820f"/><rect x="93.70" y="345.68" width="20.3" height="27.12" fill="#688ae8"/><rect x="93.70" y="337.77" width="20.3" height="7.91" fill="#2ea597"/><rect x="93.70" y="337.01" width="20.3" height="0.75" fill="#8456ce"/><rect x="93.70" y="336.26" width="20.3" height="0.75" fill="#6237a7"/><rect x="119.47" y="345.68" width="20.3" height="27.12" fill="#688ae8"/><rect x="119.47" y="337.77" width="20.3" height="7.91" fill="#2ea597"/><rect x="119.47" y="336.64" width="20.3" height="1.13" fill="#8456ce"/><rect x="145.24" y="345.68" width="20.3" height="27.12" fill="#688ae8"/><rect x="145.24" y="337.77" width="20.3" height="7.91" fill="#2ea597"/><rect x="145.24" y="336.64" width="20.3" height="1.13" fill="#8456ce"/><rect x="145.24" y="335.88" width="20.3" height="0.75" fill="#e07941"/><rect x="145.24" y="335.13" width="20.3" height="0.75" fill="#6237a7"/><rect x="171.01" y="345.68" width="20.3" height="27.12" fill="#688ae8"/><rect x="171.01" y="337.77" width="20.3" height="7.91" fill="#2ea597"/><rect x="171.01" y="336.64" width="20.3" height="1.13" fill="#8456ce"/><rect x="171.01" y="335.51" width="20.3" height="1.13" fill="#6237a7"/><rect x="171.01" y="335.13" width="20.3" height="0.38" fill="#a0820f"/><rect x="196.78" y="345.68" width="20.3" height="27.12" fill="#688ae8"/><rect x="196.78" y="337.77" width="20.3" height="7.91" fill="#2ea597"/><rect x="196.78" y="336.64" width="20.3" height="1.13" fill="#8456ce"/><rect x="222.55" y="345.68" width="20.3" height="27.12" fill="#688ae8"/><rect x="222.55" y="337.77" width="20.3" height="7.91" fill="#2ea597"/><rect x="222.55" y="336.64" width="20.3" height="1.13" fill="#8456ce"/><rect x="248.32" y="345.68" width="20.3" height="27.12" fill="#688ae8"/><rect x="248.32" y="337.77" width="20.3" height="7.91" fill="#2ea597"/><rect x="248.32" y="336.26" width="20.3" height="1.51" fill="#8456ce"/><rect x="248.32" y="335.88" width="20.3" height="0.38" fill="#e07941"/><rect x="248.32" y="334.00" width="20.3" height="1.88" fill="#6237a7"/><rect x="274.09" y="345.68" width="20.3" height="27.12" fill="#688ae8"/><rect x="274.09" y="337.77" width="20.3" height="7.91" fill="#2ea597"/><rect x="274.09" y="336.64" width="20.3" height="1.13" fill="#8456ce"/><rect x="274.09" y="336.26" width="20.3" height="0.38" fill="#a0820f"/><rect x="299.86" y="345.68" width="20.3" height="27.12" fill="#688ae8"/><rect x="299.86" y="338.14" width="20.3" height="7.53" fill="#2ea597"/><rect x="299.86" y="337.01" width="20.3" height="1.13" fill="#8456ce"/><rect x="299.86" y="335.51" width="20.3" height="1.51" fill="#e07941"/><rect x="299.86" y="334.75" width="20.3" height="0.75" fill="#6237a7"/><rect x="299.86" y="334.38" width="20.3" height="0.38" fill="#a0820f"/><rect x="325.63" y="345.68" width="20.3" height="27.12" fill="#688ae8"/><rect x="325.63" y="337.77" width="20.3" height="7.91" fill="#2ea597"/><rect x="325.63" y="336.64" width="20.3" height="1.13" fill="#8456ce"/><rect x="351.40" y="345.68" width="20.3" height="27.12" fill="#688ae8"/><rect x="351.40" y="337.77" width="20.3" height="7.91" fill="#2ea597"/><rect x="351.40" y="336.64" width="20.3" height="1.13" fill="#8456ce"/><rect x="351.40" y="333.25" width="20.3" height="3.39" fill="#e07941"/><rect x="351.40" y="330.99" width="20.3" height="2.26" fill="#6237a7"/><rect x="351.40" y="330.61" width="20.3" height="0.38" fill="#a0820f"/><rect x="377.17" y="345.68" width="20.3" height="27.12" fill="#688ae8"/><rect x="377.17" y="337.77" width="20.3" height="7.91" fill="#2ea597"/><rect x="377.17" y="336.64" width="20.3" height="1.13" fill="#8456ce"/><rect x="377.17" y="336.26" width="20.3" height="0.38" fill="#a0820f"/><rect x="402.94" y="345.68" width="20.3" height="27.12" fill="#688ae8"/><rect x="402.94" y="330.23" width="20.3" height="15.44" fill="#c33d69"/><rect x="402.94" y="322.32" width="20.3" height="7.91" fill="#2ea597"/><rect x="402.94" y="321.19" width="20.3" height="1.13" fill="#8456ce"/><rect x="428.71" y="345.68" width="20.3" height="27.12" fill="#688ae8"/><rect x="428.71" y="304.99" width="20.3" height="40.68" fill="#c33d69"/><rect x="428.71" y="297.08" width="20.3" height="7.91" fill="#2ea597"/><rect x="428.71" y="295.95" width="20.3" height="1.13" fill="#8456ce"/><rect x="428.71" y="290.68" width="20.3" height="5.27" fill="#e07941"/><rect x="428.71" y="290.30" width="20.3" height="0.38" fill="#6237a7"/><rect x="454.48" y="345.68" width="20.3" height="27.12" fill="#688ae8"/><rect x="454.48" y="304.99" width="20.3" height="40.68" fill="#c33d69"/><rect x="454.48" y="297.08" width="20.3" height="7.91" fill="#2ea597"/><rect x="454.48" y="295.95" width="20.3" height="1.13" fill="#8456ce"/><rect x="480.25" y="345.68" width="20.3" height="27.12" fill="#688ae8"/><rect x="480.25" y="304.99" width="20.3" height="40.68" fill="#c33d69"/><rect x="480.25" y="297.08" width="20.3" height="7.91" fill="#2ea597"/><rect x="480.25" y="295.95" width="20.3" height="1.13" fill="#8456ce"/><rect x="480.25" y="295.58" width="20.3" height="0.38" fill="#a0820f"/><rect x="506.02" y="345.68" width="20.3" height="27.12" fill="#688ae8"/><rect x="506.02" y="304.99" width="20.3" height="40.68" fill="#c33d69"/><rect x="506.02" y="297.08" width="20.3" height="7.91" fill="#2ea597"/><rect x="506.02" y="295.95" width="20.3" height="1.13" fill="#8456ce"/><rect x="506.02" y="294.45" width="20.3" height="1.51" fill="#e07941"/><rect x="506.02" y="294.07" width="20.3" height="0.38" fill="#6237a7"/><rect x="506.02" y="293.69" width="20.3" height="0.38" fill="#a0820f"/><rect x="531.79" y="345.68" width="20.3" height="27.12" fill="#688ae8"/><rect x="531.79" y="304.99" width="20.3" height="40.68" fill="#c33d69"/><rect x="531.79" y="297.08" width="20.3" height="7.91" fill="#2ea597"/><rect x="531.79" y="295.95" width="20.3" height="1.13" fill="#8456ce"/><rect x="531.79" y="294.82" width="20.3" height="1.13" fill="#e07941"/><rect x="557.56" y="345.68" width="20.3" height="27.12" fill="#688ae8"/><rect x="557.56" y="304.99" width="20.3" height="40.68" fill="#c33d69"/><rect x="557.56" y="297.08" width="20.3" height="7.91" fill="#2ea597"/><rect x="557.56" y="295.95" width="20.3" height="1.13" fill="#8456ce"/><rect x="557.56" y="290.30" width="20.3" height="5.65" fill="#e07941"/><rect x="557.56" y="287.67" width="20.3" height="2.64" fill="#6237a7"/><rect x="557.56" y="287.29" width="20.3" height="0.38" fill="#a0820f"/><rect x="583.33" y="345.68" width="20.3" height="27.12" fill="#688ae8"/><rect x="583.33" y="304.99" width="20.3" height="40.68" fill="#c33d69"/><rect x="583.33" y="297.08" width="20.3" height="7.91" fill="#2ea597"/><rect x="583.33" y="295.58" width="20.3" height="1.51" fill="#8456ce"/><rect x="583.33" y="294.07" width="20.3" height="1.51" fill="#e07941"/><rect x="583.33" y="293.32" width="20.3" height="0.75" fill="#6237a7"/><rect x="609.10" y="345.68" width="20.3" height="27.12" fill="#688ae8"/><rect x="609.10" y="304.99" width="20.3" height="40.68" fill="#c33d69"/><rect x="609.10" y="297.08" width="20.3" height="7.91" fill="#2ea597"/><rect x="609.10" y="295.95" width="20.3" height="1.13" fill="#8456ce"/><rect x="609.10" y="292.19" width="20.3" height="3.77" fill="#e07941"/><rect x="634.87" y="345.68" width="20.3" height="27.12" fill="#688ae8"/><rect x="634.87" y="304.99" width="20.3" height="40.68" fill="#c33d69"/><rect x="634.87" y="297.08" width="20.3" height="7.91" fill="#2ea597"/><rect x="634.87" y="295.95" width="20.3" height="1.13" fill="#8456ce"/><rect x="634.87" y="295.20" width="20.3" height="0.75" fill="#6237a7"/><rect x="660.64" y="345.68" width="20.3" height="27.12" fill="#688ae8"/><rect x="660.64" y="304.99" width="20.3" height="40.68" fill="#c33d69"/><rect x="660.64" y="297.08" width="20.3" height="7.91" fill="#2ea597"/><rect x="660.64" y="295.95" width="20.3" height="1.13" fill="#8456ce"/><rect x="660.64" y="295.58" width="20.3" height="0.38" fill="#6237a7"/><rect x="660.64" y="295.20" width="20.3" height="0.38" fill="#a0820f"/><rect x="686.41" y="345.68" width="20.3" height="27.12" fill="#688ae8"/><rect x="686.41" y="304.99" width="20.3" height="40.68" fill="#d5779a"/><rect x="686.41" y="297.08" width="20.3" height="7.91" fill="#2ea597"/><rect x="686.41" y="295.95" width="20.3" height="1.13" fill="#8456ce"/><rect x="686.41" y="286.91" width="20.3" height="9.04" fill="#e07941"/><rect x="712.18" y="345.68" width="20.3" height="27.12" fill="#688ae8"/><rect x="712.18" y="304.99" width="20.3" height="40.68" fill="#c33d69"/><rect x="712.18" y="297.08" width="20.3" height="7.91" fill="#2ea597"/><rect x="712.18" y="295.95" width="20.3" height="1.13" fill="#8456ce"/><rect x="712.18" y="295.20" width="20.3" height="0.75" fill="#6237a7"/><rect x="737.95" y="345.68" width="20.3" height="27.12" fill="#688ae8"/><rect x="737.95" y="305.18" width="20.3" height="40.50" fill="#c33d69"/><rect x="737.95" y="297.65" width="20.3" height="7.53" fill="#2ea597"/><rect x="737.95" y="296.14" width="20.3" height="1.51" fill="#8456ce"/><rect x="737.95" y="287.25" width="20.3" height="8.89" fill="#e07941"/><rect x="737.95" y="249.47" width="20.3" height="37.78" fill="#0b62ac"/><rect x="737.95" y="224.38" width="20.3" height="25.09" fill="#0f6b5e"/><rect x="737.95" y="221.59" width="20.3" height="2.79" fill="#6237a7"/><rect x="737.95" y="221.22" width="20.3" height="0.38" fill="#a0820f"/><rect x="763.72" y="369.41" width="20.3" height="3.39" fill="#688ae8"/><rect x="763.72" y="363.38" width="20.3" height="6.03" fill="#c33d69"/><rect x="763.72" y="354.53" width="20.3" height="8.85" fill="#2ea597"/><rect x="763.72" y="351.33" width="20.3" height="3.20" fill="#8456ce"/><rect x="763.72" y="350.20" width="20.3" height="1.13" fill="#e07941"/><rect x="763.72" y="349.07" width="20.3" height="1.13" fill="#962249"/><rect x="763.72" y="346.81" width="20.3" height="2.26" fill="#0f6b5e"/><rect x="763.72" y="345.30" width="20.3" height="1.51" fill="#6237a7"/><rect x="789.49" y="364.51" width="20.3" height="8.29" fill="#2ea597"/><rect x="789.49" y="361.12" width="20.3" height="3.39" fill="#8456ce"/><rect x="789.49" y="359.24" width="20.3" height="1.88" fill="#e07941"/><rect x="789.49" y="353.21" width="20.3" height="6.03" fill="#962249"/><rect x="815.26" y="364.51" width="20.3" height="8.29" fill="#2ea597"/><rect x="815.26" y="361.12" width="20.3" height="3.39" fill="#8456ce"/><rect x="815.26" y="360.37" width="20.3" height="0.75" fill="#e07941"/><rect x="841.03" y="364.51" width="20.3" height="8.29" fill="#2ea597"/><rect x="841.03" y="361.12" width="20.3" height="3.39" fill="#8456ce"/><rect x="841.03" y="359.24" width="20.3" height="1.88" fill="#962249"/><rect x="841.03" y="358.11" width="20.3" height="1.13" fill="#6237a7"/><rect x="866.80" y="364.51" width="20.3" height="8.29" fill="#2ea597"/><rect x="866.80" y="361.12" width="20.3" height="3.39" fill="#8456ce"/><rect x="866.80" y="359.24" width="20.3" height="1.88" fill="#962249"/><rect x="892.57" y="364.51" width="20.3" height="8.29" fill="#2ea597"/><rect x="892.57" y="361.12" width="20.3" height="3.39" fill="#8456ce"/><rect x="918.34" y="364.51" width="20.3" height="8.29" fill="#2ea597"/><rect x="918.34" y="361.12" width="20.3" height="3.39" fill="#8456ce"/><rect x="944.11" y="364.51" width="20.3" height="8.29" fill="#2ea597"/><rect x="944.11" y="361.12" width="20.3" height="3.39" fill="#8456ce"/><rect x="969.88" y="364.51" width="20.3" height="8.29" fill="#2ea597"/><rect x="969.88" y="361.12" width="20.3" height="3.39" fill="#8456ce"/><rect x="995.65" y="364.51" width="20.3" height="8.29" fill="#2ea597"/><rect x="995.65" y="361.12" width="20.3" height="3.39" fill="#8456ce"/><rect x="1021.42" y="364.51" width="20.3" height="8.29" fill="#2ea597"/><rect x="1021.42" y="361.12" width="20.3" height="3.39" fill="#8456ce"/><rect x="1021.42" y="360.93" width="20.3" height="0.19" fill="#a0820f"/><rect x="1047.19" y="364.51" width="20.3" height="8.29" fill="#2ea597"/><rect x="1047.19" y="361.12" width="20.3" height="3.39" fill="#8456ce"/><rect x="1047.19" y="355.47" width="20.3" height="5.65" fill="#962249"/><rect x="1047.19" y="354.34" width="20.3" height="1.13" fill="#6237a7"/><rect x="1072.96" y="364.51" width="20.3" height="8.29" fill="#2ea597"/><rect x="1072.96" y="361.12" width="20.3" height="3.39" fill="#8456ce"/><rect x="1072.96" y="358.49" width="20.3" height="2.64" fill="#962249"/><rect x="1072.96" y="357.73" width="20.3" height="0.75" fill="#6237a7"/><rect x="1098.73" y="364.51" width="20.3" height="8.29" fill="#2ea597"/><rect x="1098.73" y="361.12" width="20.3" height="3.39" fill="#8456ce"/><rect x="1098.73" y="358.49" width="20.3" height="2.64" fill="#962249"/><rect x="1098.73" y="357.73" width="20.3" height="0.75" fill="#a0820f"/><rect x="1124.50" y="364.51" width="20.3" height="8.29" fill="#2ea597"/><rect x="1124.50" y="361.12" width="20.3" height="3.39" fill="#8456ce"/><rect x="1124.50" y="352.08" width="20.3" height="9.04" fill="#962249"/><rect x="1150.27" y="371.29" width="20.3" height="1.51" fill="#2ea597"/><rect x="1150.27" y="370.54" width="20.3" height="0.75" fill="#8456ce"/><rect x="1150.27" y="369.41" width="20.3" height="1.13" fill="#962249"/><path d="M1064.8,538.3 V545 M1061.2,542 L1064.8,545.6 L1068.4,542 M1060.1,548.3 H1069.5" fill="none" stroke="#0868d4" stroke-width="1.75" stroke-linecap="round" stroke-linejoin="round"/><path d="M1097.9,568.3 L1093.6,572.5 L1097.9,576.7" fill="none" stroke="#9a9ea6" stroke-width="1.3"/><path d="M1134.6,568.3 L1138.9,572.5 L1134.6,576.7" fill="none" stroke="#9a9ea6" stroke-width="1.3"/><polygon points="1167.00,577.85 1166.65,577.84 1166.30,577.80 1165.96,577.75 1165.77,577.09 1165.67,576.43 1165.41,576.33 1165.16,576.22 1164.92,576.09 1164.69,575.95 1164.47,575.79 1164.26,575.62 1163.64,575.86 1162.98,576.03 1162.76,575.76 1162.55,575.47 1162.37,575.17 1162.20,574.87 1162.06,574.55 1161.93,574.22 1162.41,573.73 1162.93,573.31 1162.89,573.04 1162.86,572.77 1162.85,572.50 1162.86,572.23 1162.89,571.96 1162.93,571.69 1162.41,571.27 1161.93,570.78 1162.06,570.45 1162.20,570.13 1162.37,569.83 1162.55,569.53 1162.76,569.24 1162.98,568.97 1163.64,569.14 1164.26,569.38 1164.47,569.21 1164.69,569.05 1164.92,568.91 1165.16,568.78 1165.41,568.67 1165.67,568.57 1165.77,567.91 1165.96,567.25 1166.30,567.20 1166.65,567.16 1167.00,567.15 1167.35,567.16 1167.70,567.20 1168.04,567.25 1168.23,567.91 1168.33,568.57 1168.59,568.67 1168.84,568.78 1169.08,568.91 1169.31,569.05 1169.53,569.21 1169.74,569.38 1170.36,569.14 1171.02,568.97 1171.24,569.24 1171.45,569.53 1171.63,569.83 1171.80,570.13 1171.94,570.45 1172.07,570.78 1171.59,571.27 1171.07,571.69 1171.11,571.96 1171.14,572.23 1171.15,572.50 1171.14,572.77 1171.11,573.04 1171.07,573.31 1171.59,573.73 1172.07,574.22 1171.94,574.55 1171.80,574.87 1171.63,575.17 1171.45,575.47 1171.24,575.76 1171.02,576.03 1170.36,575.86 1169.74,575.62 1169.53,575.79 1169.31,575.95 1169.08,576.09 1168.84,576.22 1168.59,576.33 1168.33,576.43 1168.23,577.09 1168.04,577.75 1167.70,577.80 1167.35,577.84" fill="none" stroke="#16191f" stroke-width="1.35" stroke-linejoin="round"/><circle cx="1167.0" cy="572.5" r="1.7" fill="none" stroke="#16191f" stroke-width="1.35"/><circle cx="31.45" cy="571.5" r="3.75" fill="none" stroke="#2c3440" stroke-width="1.45"/><path d="M34.3,574.4 L37.2,577.3" stroke="#2c3440" stroke-width="1.6" stroke-linecap="round"/></svg>
<div style="position:absolute;left:1192px;top:0;width:8px;height:965px;background:#fff"></div>
<div style="position:absolute;left:2px;top:3px;width:1189px;height:1100px;border:1px solid #d1d1d8;border-radius:10px;pointer-events:none"></div>
<svg width="1200" height="965" viewBox="0 0 1200 965"><rect x="397" y="300.8" width="362.8" height="45" fill="none" stroke="#c02a5f" stroke-width="2"/><rect x="592.5" y="526.5" width="203" height="21.8" fill="#fff" stroke="#c02a5f" stroke-width="1.6"/><rect x="851.3" y="678.7" width="340.9" height="20.5" fill="none" stroke="#c02a5f" stroke-width="1.7"/><rect x="484.5" y="528.6" width="76.6" height="19.8" fill="#fff" stroke="#00f000" stroke-width="2"/><rect x="306.9" y="677.9" width="543.8" height="22.2" fill="none" stroke="#00f000" stroke-width="1.8"/><line x1="689" y1="526" x2="589.57" y2="356.49" stroke="#c02a5f" stroke-width="2.2"/><polygon points="584,347 593.36,354.26 585.77,358.71" fill="#c02a5f"/><line x1="711" y1="548.4" x2="847.19" y2="675.36" stroke="#c02a5f" stroke-width="2.2"/><polygon points="855.6,683.2 844.05,678.72 850.32,671.99" fill="#c02a5f"/><line x1="521" y1="548.6" x2="521.00" y2="665.00" stroke="#00f000" stroke-width="2.4"/><polygon points="521,676.6 516.50,665.00 525.50,665.00" fill="#00f000"/></svg>
<div class="t" style="left:618.60px;top:531.53px;font-size:12.6px;font-weight:bold;font-style:normal;color:#c02a5f;letter-spacing:-0.17px;">Free-tier usage exceeded,</div>
<div class="t" style="left:499.00px;top:532.59px;font-size:12.3px;font-weight:bold;font-style:normal;color:#00f000;">Free tier</div>
<div style="position:absolute;left:0;top:963px;width:1200px;height:2px;background:#f0f0f2"></div>
</body></html>
